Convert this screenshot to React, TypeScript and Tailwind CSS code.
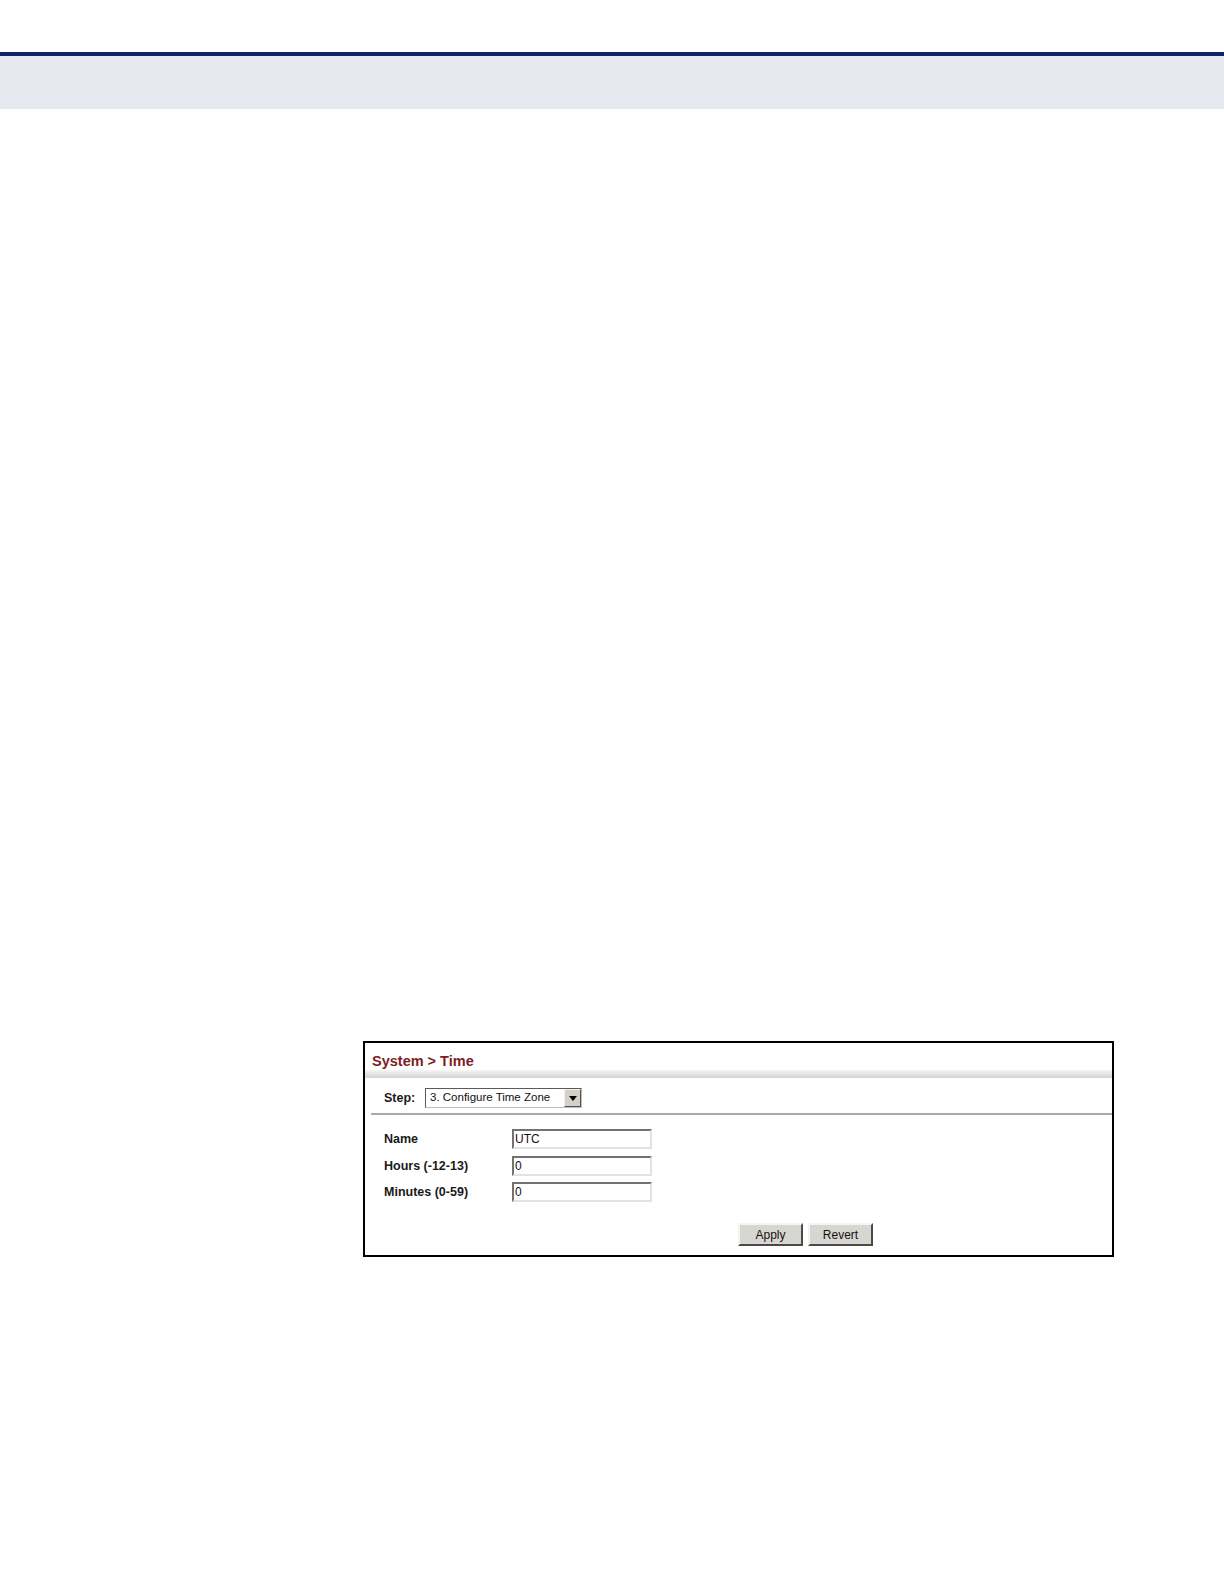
import React from "react";

const font = { fontFamily: '"Liberation Sans", Arial, sans-serif' };

function TextField({ value }: { value: string }) {
  return (
    <div className="flex h-[20px] w-[140px] items-center border-2 border-t-[#727272] border-l-[#727272] border-r-[#e2e2e2] border-b-[#e2e2e2] bg-white pl-[1px] text-[12px] leading-none text-[#111]">
      {value}
    </div>
  );
}

function FieldRow({ label, value, className = "" }: { label: string; value: string; className?: string }) {
  return (
    <div className={`flex h-[20px] items-center ${className}`}>
      <span className="w-[128px] text-[12.5px] font-bold text-[#1a1a1a]">{label}</span>
      <TextField value={value} />
    </div>
  );
}

function GrayButton({ children }: { children: React.ReactNode }) {
  return (
    <button
      type="button"
      className="flex h-[23px] w-[65px] items-center justify-center border-2 border-t-[#f4f4f4] border-l-[#f4f4f4] border-r-[#4a4a4a] border-b-[#4a4a4a] bg-[#d8d6d1] text-[12px] text-[#111]"
    >
      {children}
    </button>
  );
}

export default function App() {
  return (
    <div className="min-h-[1584px] w-[1224px] bg-white" style={font}>
      {/* Header band */}
      <div className="h-[52px]" />
      <div className="h-[4px] bg-[#0b2462]" />
      <div className="h-[53px] bg-[#e6e9f0]" />

      {/* Screenshot frame */}
      <div className="ml-[363px] mt-[932px] flex h-[216px] w-[751px] flex-col border-2 border-black bg-white">
        <div className="pl-[7px] pt-[10px] text-[14.5px] font-bold leading-[17px] text-[#7d1d23]">
          System &gt; Time
        </div>
        <div className="h-[8px] bg-gradient-to-b from-[#f6f6f6] to-[#d4d4d4]" />

        <div className="flex h-[35px] items-start pl-[19px] pt-[10px]">
          <span className="flex h-[20px] w-[41px] items-center text-[12.5px] font-bold text-[#1a1a1a]">Step:</span>
          <div className="flex h-[20px] w-[157px] items-center border border-t-[#5a5a5a] border-l-[#5a5a5a] border-r-[#bdbdbd] border-b-[#bdbdbd] bg-white">
            <span className="flex-1 pl-[4px] text-[11.5px] leading-none text-[#111]">3. Configure Time Zone</span>
            <div className="flex h-[18px] w-[17px] items-center justify-center border border-t-[#f2f2f2] border-l-[#f2f2f2] border-r-[#555] border-b-[#555] bg-[#d4d0c8]">
              <svg width="8" height="5" viewBox="0 0 8 5">
                <path d="M0 0h8L4 5z" fill="#000" />
              </svg>
            </div>
          </div>
        </div>
        <div className="ml-[6px] h-[2px] bg-[#a9a9a9]" />

        <div className="mt-[14px] flex flex-col pl-[19px]">
          <FieldRow label="Name" value="UTC" />
          <FieldRow label="Hours (-12-13)" value="0" className="mt-[7px]" />
          <FieldRow label="Minutes (0-59)" value="0" className="mt-[6px]" />
        </div>

        <div className="ml-[373px] mt-[21px] flex gap-[5px]">
          <GrayButton>Apply</GrayButton>
          <GrayButton>Revert</GrayButton>
        </div>
      </div>
    </div>
  );
}
